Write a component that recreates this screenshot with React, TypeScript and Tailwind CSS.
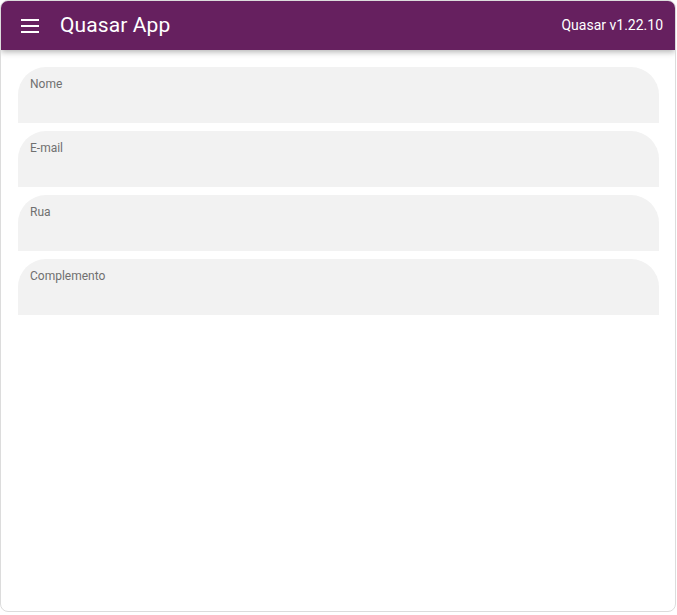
import { useState } from "react";

const fields = ["Nome", "E-mail", "Rua", "Complemento"];

export default function App() {
  const [values, setValues] = useState<Record<string, string>>({});

  return (
    <div className="w-[677px] h-[615px] bg-white font-['Roboto',sans-serif]">
      <div className="h-[612px] w-[676px] rounded-lg border border-[#dcdcdc] overflow-hidden flex flex-col bg-white">
        {/* Header */}
        <header className="h-[49px] shrink-0 bg-[#66205f] text-white flex items-center pl-[20px] pr-[12px] shadow-[0_2px_6px_rgba(0,0,0,0.3)] relative z-10">
          <button className="w-[20px] h-[20px] flex flex-col justify-between py-[3px]" aria-label="Menu">
            <span className="block h-[2px] w-[18px] bg-white" />
            <span className="block h-[2px] w-[18px] bg-white" />
            <span className="block h-[2px] w-[18px] bg-white" />
          </button>
          <h1 className="ml-[19px] text-[21px] leading-none tracking-[0.1px]">Quasar App</h1>
          <span className="ml-auto text-[14px]">Quasar v1.22.10</span>
        </header>

        {/* Form */}
        <main className="flex-1 flex flex-col gap-2 pt-[17px] pl-[17px] pr-[16px]">
          {fields.map((label) => (
            <label
              key={label}
              className="block h-[56px] rounded-t-[28px] bg-[#f2f2f2] px-[12px] pt-[10px]"
            >
              <span className="block text-[12px] leading-[14px] text-[#707070]">{label}</span>
              <input
                className="w-full bg-transparent outline-none text-[14px] text-[#222] mt-[4px]"
                value={values[label] ?? ""}
                onChange={(e) => setValues({ ...values, [label]: e.target.value })}
              />
            </label>
          ))}
        </main>
      </div>
    </div>
  );
}
